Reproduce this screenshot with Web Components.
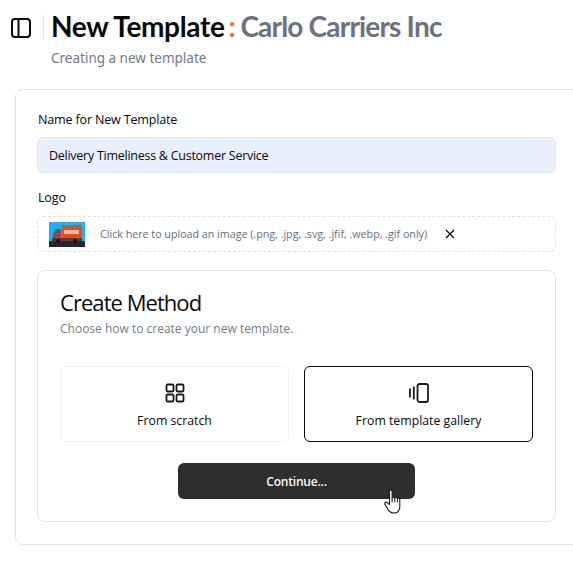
<!DOCTYPE html>
<html>
<head>
<meta charset="utf-8">
<title>New Template</title>
<style>
  html, body { margin: 0; height: 100%; background: #fff; overflow: hidden; }
  body { font-family: "Open Sans", "Noto Sans", sans-serif; color: #0a0a0a; }
</style>
</head>
<body>
<template-page></template-page>
<script>
class PageHeader extends HTMLElement {
  constructor() {
    super();
    this.attachShadow({ mode: "open" }).innerHTML = `
      <style>
        :host { display: flex; height: 89px; box-sizing: border-box; padding: 15px 0 0 11px; }
        .toggle { width: 20px; height: 20px; margin-top: 3px; flex: none; }
        .sep { width: 1px; height: 24px; background: #e2e2e2; margin: 0 7px 0 12px; flex: none; }
        .titles { display: flex; flex-direction: column; margin-top: -1px; }
        h1 { margin: 0; display: flex; font: 700 28px/24px Lato, sans-serif; letter-spacing: -.35px; white-space: nowrap; color: #0a0a0a; }
        h1 .colon { color: #f97316; margin: 0 5px 0 4px; }
        h1 .org { color: #6b7280; letter-spacing: -.8px; }
        p { margin: 11px 0 0; font: 400 13.5px/18px "Noto Sans", sans-serif; color: #737b87; }
      </style>
      <svg class="toggle" viewBox="0 0 20 20" fill="none" stroke="#0a0a0a" stroke-width="2">
        <rect x="1" y="1" width="18" height="18" rx="3"/><path d="M7.500 1v18"/>
      </svg>
      <div class="sep"></div>
      <div class="titles">
        <h1><span>New Template</span><span class="colon">:</span><span class="org">Carlo Carriers Inc</span></h1>
        <p>Creating a new template</p>
      </div>`;
  }
}

class FormField extends HTMLElement {
  constructor() {
    super();
    this.attachShadow({ mode: "open" }).innerHTML = `
      <style>
        :host { display: block; }
        label { display: block; font: 400 12.6px/18px "Open Sans", sans-serif; letter-spacing: -.2px; color: #0a0a0a;
          margin: 0 0 var(--gap, 8px) 1px; }
      </style>
      <label></label>
      <slot></slot>`;
  }
  connectedCallback() {
    this.shadowRoot.querySelector("label").textContent = this.getAttribute("label");
  }
}

class NameInput extends HTMLElement {
  constructor() {
    super();
    this.attachShadow({ mode: "open" }).innerHTML = `
      <style>
        :host { display: flex; align-items: center; height: 36px; box-sizing: border-box; padding: 1px 11px 0;
          background: #e8f0fe; border: 1px solid #e2e8f0; border-radius: 6px;
          font: 400 12.5px/18px "Open Sans", sans-serif; letter-spacing: -.26px; color: #0a0a0a; }
      </style>
      <slot></slot>`;
  }
}

class LogoUpload extends HTMLElement {
  constructor() {
    super();
    this.attachShadow({ mode: "open" }).innerHTML = `
      <style>
        :host { display: flex; align-items: center; height: 36px; box-sizing: border-box; padding: 0 11px;
          border: 1px dashed #e2e2e2; border-radius: 6px; }
        .thumb { width: 36px; height: 25px; flex: none; display: block; }
        span { margin-left: 15px; font: 400 10.7px/16px "Open Sans", sans-serif; color: #64707f; white-space: nowrap; }
        .x { width: 10px; height: 10px; margin-left: 18px; flex: none; }
      </style>
      <svg class="thumb" viewBox="0 0 36 25">
        <rect width="36" height="25" fill="#19b4ee"/>
        <rect y="19" width="36" height="6" fill="#23272f"/>
        <rect x="13" y="3" width="20" height="14" fill="#d9512c"/>
        <rect x="15" y="8" width="15" height="4" fill="#f5b58c"/>
        <path d="M4 17v-6l3-4h5v10z" fill="#b5432a"/>
        <path d="M6 11l2-3h3v3z" fill="#4f5c68"/>
        <rect x="3" y="16" width="30" height="3" fill="#5d3a34"/>
        <circle cx="9" cy="19" r="2" fill="#15181d"/><circle cx="26" cy="19" r="2" fill="#15181d"/>
      </svg>
      <span><slot></slot></span>
      <svg class="x" viewBox="0 0 10 10" fill="none" stroke="#0a0a0a" stroke-width="1.300"><path d="M1 1l8 8M9 1l-8 8"/></svg>`;
  }
}

class MethodTile extends HTMLElement {
  constructor() {
    super();
    this.attachShadow({ mode: "open" }).innerHTML = `
      <style>
        :host { display: flex; flex-direction: column; align-items: center; box-sizing: border-box; height: 76px;
          padding-top: 16px; border: 1px solid #f1f1f1; border-radius: 6px;
          font: 500 12.3px/18px "Open Sans", sans-serif; color: #0a0a0a; }
        :host([selected]) { border-color: #0a0a0a; }
        ::slotted(svg) { width: 20px; height: 20px; display: block; margin-bottom: 9px; }
      </style>
      <slot name="icon"></slot>
      <slot></slot>`;
  }
}

class CreateMethod extends HTMLElement {
  constructor() {
    super();
    this.attachShadow({ mode: "open" }).innerHTML = `
      <style>
        :host { display: block; box-sizing: border-box; height: 252px; padding: 16px 22px 0; margin-top: 18px;
          border: 1px solid #e5e5e5; border-radius: 8px; }
        h2 { margin: 0; font: 500 22px/30px "Open Sans", sans-serif; letter-spacing: -.95px; color: #0a0a0a; }
        p { margin: 3px 0 0; font: 400 12px/18px "Open Sans", sans-serif; color: #747c88; }
        .tiles { display: grid; grid-template-columns: 229px 229px; column-gap: 15px; margin-top: 28px; }
        .action { display: flex; justify-content: center; margin-top: 21px; }
        button { width: 237px; height: 36px; border: 0; border-radius: 6px; background: #2e2e2e; color: #fafafa;
          font: 600 12px/18px "Open Sans", sans-serif; letter-spacing: -.2px; padding: 1px 0 0; }
      </style>
      <h2>Create Method</h2>
      <p>Choose how to create your new template.</p>
      <div class="tiles"><slot></slot></div>
      <div class="action"><button>Continue...</button></div>`;
  }
}

class HandCursor extends HTMLElement {
  constructor() {
    super();
    this.attachShadow({ mode: "open" }).innerHTML = `
      <style>
        :host { position: absolute; left: 384px; top: 489px; width: 20px; height: 26px; display: block; }
        svg { display: block; }
      </style>
      <svg width="20" height="26" viewBox="0 0 20 26">
        <path d="M5.500 2.200c0-1.600 2.600-1.600 2.600 0v7c.3-1.400 2.600-1.400 2.700.2.2-1.200 2.500-1.200 2.600.4.4-1 2.400-.8 2.400.8v6.600c0 4-2.200 6.800-5.800 6.800-3 0-4.600-1.300-6-3.400L1 15.400c-.9-1.500 1-3 2.300-1.800l2.200 2z"
          fill="#fff" stroke="#1a1a1a" stroke-width="1.100" stroke-linejoin="round"/>
        <path d="M8.100 9.200v4.300M10.800 9.500v4M13.400 10.200v3.300" stroke="#1a1a1a" stroke-width="1" fill="none"/>
      </svg>`;
  }
}

class TemplatePage extends HTMLElement {
  constructor() {
    super();
    this.attachShadow({ mode: "open" }).innerHTML = `
      <style>
        :host { display: block; width: 573px; height: 563px; position: relative; overflow: hidden; }
        .card { box-sizing: border-box; width: 600px; height: 456px; margin-left: 15px; padding: 21px 58px 0 21px;
          border: 1px solid #e5e5e5; border-radius: 8px; }
        form-field + form-field { margin-top: 16px; --gap: 9px; }
      </style>
      <page-header></page-header>
      <div class="card">
        <form-field label="Name for New Template">
          <name-input>Delivery Timeliness &amp; Customer Service</name-input>
        </form-field>
        <form-field label="Logo">
          <logo-upload>Click here to upload an image (.png, .jpg, .svg, .jfif, .webp, .gif only)</logo-upload>
        </form-field>
        <create-method>
          <method-tile>
            <svg slot="icon" viewBox="0 0 20 20" fill="none" stroke="#1a1a1a" stroke-width="1.800">
              <rect x="1.500" y="1.500" width="7" height="7" rx="1.300"/><rect x="11.500" y="1.500" width="7" height="7" rx="1.300"/>
              <rect x="1.500" y="11.500" width="7" height="7" rx="1.300"/><rect x="11.500" y="11.500" width="7" height="7" rx="1.300"/>
            </svg>
            From scratch
          </method-tile>
          <method-tile selected>
            <svg slot="icon" viewBox="0 0 20 20" fill="none" stroke="#1a1a1a" stroke-width="1.800">
              <rect x="8.500" y="1" width="10.500" height="18" rx="2"/><path d="M1 5.500v9M4.800 3.500v13"/>
            </svg>
            From template gallery
          </method-tile>
        </create-method>
      </div>
      <hand-cursor></hand-cursor>`;
  }
}

customElements.define("page-header", PageHeader);
customElements.define("form-field", FormField);
customElements.define("name-input", NameInput);
customElements.define("logo-upload", LogoUpload);
customElements.define("method-tile", MethodTile);
customElements.define("create-method", CreateMethod);
customElements.define("hand-cursor", HandCursor);
customElements.define("template-page", TemplatePage);
</script>
</body>
</html>
